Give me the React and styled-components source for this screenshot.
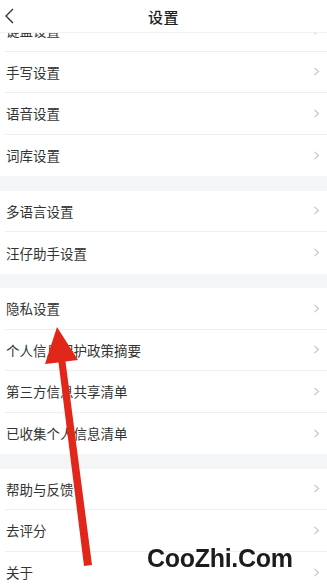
import React, { useLayoutEffect, useRef } from "react";
import styled, { createGlobalStyle } from "styled-components";

const GlobalStyle = createGlobalStyle`
  html, body {
    margin: 0;
    padding: 0;
    height: 100%;
    background: #fff;
  }
  #root {
    height: 100%;
  }
  * {
    box-sizing: border-box;
  }
`;

const Screen = styled.div`
  position: relative;
  width: 100%;
  height: 100vh;
  overflow-y: auto;
  background: #f4f5f7;
  font-family: "Noto Sans CJK SC", "Noto Sans", sans-serif;
  scrollbar-width: none;
  &::-webkit-scrollbar {
    display: none;
  }
`;

const Header = styled.header`
  position: sticky;
  top: 0;
  z-index: 5;
  height: 33px;
  display: flex;
  align-items: center;
  justify-content: center;
  background: #fff;
  border-bottom: 1px solid #f2f2f2;
`;

const Back = styled.div`
  position: absolute;
  left: 3px;
  top: 7px;
  width: 12px;
  height: 18px;
  display: flex;
`;

const Title = styled.h1`
  margin: 0;
  font-size: 15px;
  font-weight: 500;
  color: #1f1f1f;
  letter-spacing: 0.5px;
`;

const Group = styled.section`
  background: #fff;
  & + & {
    margin-top: 14.5px;
  }
`;

const Row = styled.div`
  height: 41.5px;
  margin-left: 5px;
  padding-right: 7px;
  display: flex;
  align-items: center;
  justify-content: space-between;
  border-bottom: ${(p) => (p.$last ? "none" : "1px solid #efefef")};
`;

const Label = styled.span`
  font-size: 13.5px;
  color: #333;
  padding-left: 1px;
`;

const Chevron = () => (
  <svg width="7" height="9" viewBox="0 0 7 9">
    <polyline
      points="1.5,0.8 5.5,4.5 1.5,8.2"
      fill="none"
      stroke="#c2c2c2"
      strokeWidth="1.1"
    />
  </svg>
);

const Overlay = styled.svg`
  position: fixed;
  left: 0;
  top: 0;
  z-index: 10;
  pointer-events: none;
`;

const Watermark = styled.div`
  position: fixed;
  left: 147px;
  top: 546px;
  z-index: 11;
  font-family: "Liberation Sans", Arial, sans-serif;
  font-weight: 700;
  font-size: 25px;
  line-height: 1;
  color: #1c1c1c;
  letter-spacing: -0.3px;
`;

const groups = [
  ["键盘设置", "手写设置", "语音设置", "词库设置"],
  ["多语言设置", "汪仔助手设置"],
  ["隐私设置", "个人信息保护政策摘要", "第三方信息共享清单", "已收集个人信息清单"],
  ["帮助与反馈", "去评分", "关于"],
];

export default function App() {
  const ref = useRef(null);

  useLayoutEffect(() => {
    if (ref.current) ref.current.scrollTop = 23;
  }, []);

  return (
    <>
      <GlobalStyle />
      <Screen ref={ref}>
        <Header>
          <Back>
            <svg width="12" height="18" viewBox="0 0 12 18">
              <polyline
                points="10,2 3,9 10,16"
                fill="none"
                stroke="#333"
                strokeWidth="1.4"
              />
            </svg>
          </Back>
          <Title>设置</Title>
        </Header>
        {groups.map((items, gi) => (
          <Group key={gi}>
            {items.map((item, i) => (
              <Row key={item} $last={i === items.length - 1}>
                <Label>{item}</Label>
                <Chevron />
              </Row>
            ))}
          </Group>
        ))}
      </Screen>
      <Overlay width="327" height="586" viewBox="0 0 327 586">
        <polygon
          points="57,327 78,360 65.5,361.5 92,565 84,566 58.5,362.5 45,364"
          fill="#e1261a"
        />
      </Overlay>
      <Watermark>CooZhi.Com</Watermark>
    </>
  );
}
